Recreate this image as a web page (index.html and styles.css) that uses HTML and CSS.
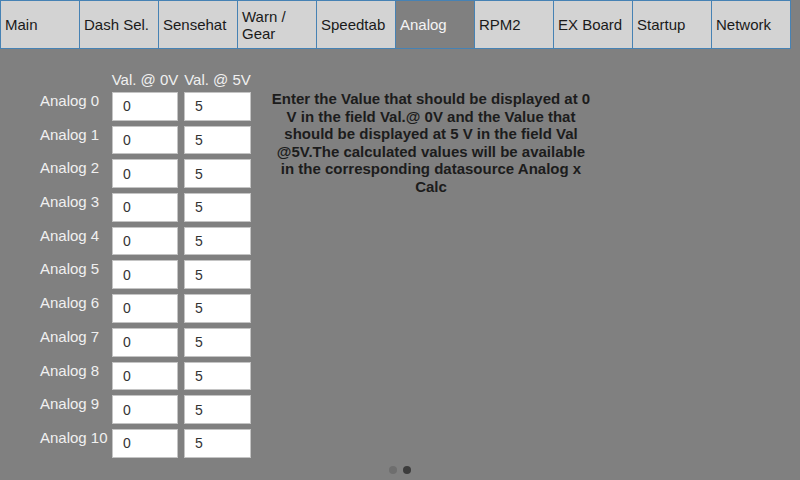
FILE: index.html
```html
<!DOCTYPE html>
<html>
<head>
<meta charset="utf-8">
<link rel="stylesheet" href="styles.css">
</head>
<body>
<div class="app">
  <div class="tabs">
    <div class="tab first">Main</div>
    <div class="tab">Dash Sel.</div>
    <div class="tab">Sensehat</div>
    <div class="tab">Warn / Gear</div>
    <div class="tab">Speedtab</div>
    <div class="tab active">Analog</div>
    <div class="tab">RPM2</div>
    <div class="tab">EX Board</div>
    <div class="tab">Startup</div>
    <div class="tab">Network</div>
  </div>
  <div class="content">
    <div class="form">
      <div></div>
      <div class="head">Val. @ 0V</div>
      <div class="head">Val. @ 5V</div>

      <div class="label">Analog 0</div><div class="field">0</div><div class="field">5</div>
      <div class="label">Analog 1</div><div class="field">0</div><div class="field">5</div>
      <div class="label">Analog 2</div><div class="field">0</div><div class="field">5</div>
      <div class="label">Analog 3</div><div class="field">0</div><div class="field">5</div>
      <div class="label">Analog 4</div><div class="field">0</div><div class="field">5</div>
      <div class="label">Analog 5</div><div class="field">0</div><div class="field">5</div>
      <div class="label">Analog 6</div><div class="field">0</div><div class="field">5</div>
      <div class="label">Analog 7</div><div class="field">0</div><div class="field">5</div>
      <div class="label">Analog 8</div><div class="field">0</div><div class="field">5</div>
      <div class="label">Analog 9</div><div class="field">0</div><div class="field">5</div>
      <div class="label">Analog 10</div><div class="field">0</div><div class="field">5</div>
    </div>
    <div class="desc">Enter the Value that should be displayed at 0 V in the field Val.@ 0V and the Value that should be displayed at 5 V in the field Val @5V.The calculated values will be available in the corresponding datasource Analog x Calc</div>
  </div>
  <div class="pager">
    <span class="dot"></span>
    <span class="dot current"></span>
  </div>
</div>
</body>
</html>
```

FILE: styles.css
```css
html, body {
  margin: 0;
  padding: 0;
  background: #808080;
}
.app {
  width: 800px;
  height: 480px;
  display: flex;
  flex-direction: column;
  font-family: "Liberation Sans", Arial, sans-serif;
  overflow: hidden;
}
.tabs {
  display: flex;
  height: 49px;
  flex: none;
}
.tab {
  box-sizing: border-box;
  width: 79px;
  height: 49px;
  background: #d3d3d3;
  border-top: 1px solid #4682b4;
  border-bottom: 1px solid #4682b4;
  border-right: 1px solid #4682b4;
  color: #1a1a1a;
  font-size: 15px;
  line-height: 17px;
  padding-left: 4px;
  display: flex;
  align-items: center;
}
.tab.first {
  width: 80px;
  border-left: 1px solid #4682b4;
}
.tab.active {
  background: #808080;
  color: #f4f4f4;
}
.content {
  flex: 1;
  display: flex;
  align-items: flex-start;
  padding: 22px 0 0 40px;
}
.form {
  display: grid;
  grid-template-columns: 66px 66px 67px;
  grid-template-rows: 16px;
  grid-auto-rows: 28.7px;
  column-gap: 6px;
  row-gap: 5px;
}
.head {
  color: #f0f0f0;
  font-size: 15px;
  line-height: 17px;
  white-space: nowrap;
  text-align: center;
  justify-self: center;
}
.label {
  color: #f0f0f0;
  font-size: 15px;
  line-height: 17px;
  white-space: nowrap;
}
.field {
  box-sizing: border-box;
  background: #ffffff;
  border: 1px solid #c4c4c4;
  color: #333333;
  font-size: 14px;
  padding-left: 10px;
  display: flex;
  align-items: center;
}
.desc {
  width: 320px;
  margin: 19px 0 0 20px;
  color: #1c1c1c;
  font-weight: bold;
  font-size: 15px;
  line-height: 17.6px;
  text-align: center;
}
.pager {
  flex: none;
  height: 8px;
  margin-bottom: 6px;
  display: flex;
  justify-content: center;
  gap: 6px;
}
.dot {
  width: 8px;
  height: 8px;
  border-radius: 50%;
  background: #6e6e6e;
}
.dot.current {
  background: #3c3c3c;
}
```
